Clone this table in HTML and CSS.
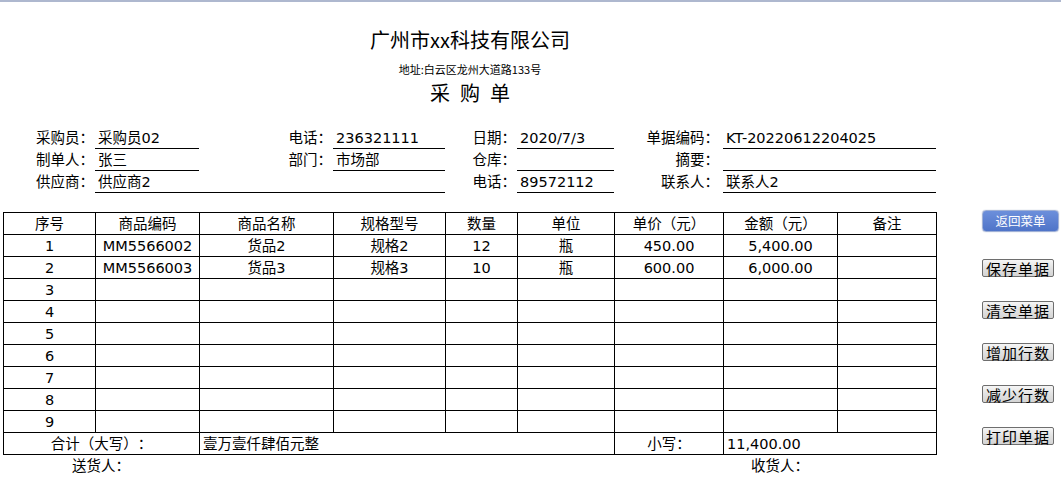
FILE: index.html
```html
<!DOCTYPE html>
<html lang="zh-CN">
<head>
<meta charset="utf-8">
<title>采购单</title>
<link rel="stylesheet" href="styles.css">
</head>
<body>
<div class="page">
  <main class="sheet">
    <header class="head">
      <h1 class="company">广州市xx科技有限公司</h1>
      <div class="addr">地址:白云区龙州大道路133号</div>
      <h2 class="doc-title">采购单</h2>
    </header>

    <section class="info">
      <div class="lbl">采购员：</div>
      <div class="val">采购员02</div>
      <div class="lbl">电话：</div>
      <div class="val">236321111</div>
      <div class="lbl">日期：</div>
      <div class="val">2020/7/3</div>
      <div class="lbl lbl-wide">单据编码：</div>
      <div class="val span2">KT-20220612204025</div>

      <div class="lbl">制单人：</div>
      <div class="val">张三</div>
      <div class="lbl">部门：</div>
      <div class="val">市场部</div>
      <div class="lbl">仓库：</div>
      <div class="val"></div>
      <div class="lbl lbl-wide">摘要：</div>
      <div class="val span2"></div>

      <div class="lbl">供应商：</div>
      <div class="val span3">供应商2</div>
      <div class="lbl">电话：</div>
      <div class="val">89572112</div>
      <div class="lbl lbl-wide">联系人：</div>
      <div class="val span2">联系人2</div>
    </section>

    <table class="items">
      <colgroup>
        <col class="c1"><col class="c2"><col class="c3"><col class="c4"><col class="c5"><col class="c6"><col class="c7"><col class="c8"><col class="c9">
      </colgroup>
      <thead>
        <tr><th>序号</th><th>商品编码</th><th>商品名称</th><th>规格型号</th><th>数量</th><th>单位</th><th>单价（元）</th><th>金额（元）</th><th>备注</th></tr>
      </thead>
      <tbody>
        <tr><td>1</td><td>MM5566002</td><td>货品2</td><td>规格2</td><td>12</td><td>瓶</td><td>450.00</td><td>5,400.00</td><td></td></tr>
        <tr><td>2</td><td>MM5566003</td><td>货品3</td><td>规格3</td><td>10</td><td>瓶</td><td>600.00</td><td>6,000.00</td><td></td></tr>
        <tr><td>3</td><td></td><td></td><td></td><td></td><td></td><td></td><td></td><td></td></tr>
        <tr><td>4</td><td></td><td></td><td></td><td></td><td></td><td></td><td></td><td></td></tr>
        <tr><td>5</td><td></td><td></td><td></td><td></td><td></td><td></td><td></td><td></td></tr>
        <tr><td>6</td><td></td><td></td><td></td><td></td><td></td><td></td><td></td><td></td></tr>
        <tr><td>7</td><td></td><td></td><td></td><td></td><td></td><td></td><td></td><td></td></tr>
        <tr><td>8</td><td></td><td></td><td></td><td></td><td></td><td></td><td></td><td></td></tr>
        <tr><td>9</td><td></td><td></td><td></td><td></td><td></td><td></td><td></td><td></td></tr>
        <tr class="total">
          <td colspan="2">合计（大写）：</td>
          <td colspan="4" class="left">壹万壹仟肆佰元整</td>
          <td>小写：</td>
          <td colspan="2" class="left">11,400.00</td>
        </tr>
      </tbody>
    </table>

    <footer class="sign">
      <div class="sender">送货人：</div>
      <div class="receiver">收货人：</div>
    </footer>
  </main>

  <aside class="actions">
    <button class="btn-primary" type="button">返回菜单</button>
    <button class="btn first" type="button">保存单据</button>
    <button class="btn" type="button">清空单据</button>
    <button class="btn" type="button">增加行数</button>
    <button class="btn" type="button">减少行数</button>
    <button class="btn" type="button">打印单据</button>
  </aside>
</div>
</body>
</html>
```

FILE: styles.css
```css
html, body {
  margin: 0;
  padding: 0;
  background: #fff;
}

body {
  border-top: 2px solid #aeb8cf;
  font-family: "DejaVu Sans", "Noto Sans CJK SC", sans-serif;
  font-size: 14.5px;
  color: #000;
  text-spacing-trim: space-all;
}

.page {
  display: flex;
  align-items: flex-start;
}

.sheet {
  width: 940px;
  flex: none;
}

.head {
  text-align: center;
  font-family: "Noto Sans CJK SC", sans-serif;
}

.company {
  margin: 24px 0 0;
  font-size: 20px;
  font-weight: normal;
  line-height: 28px;
}

.addr {
  margin-top: 7px;
  font-size: 11px;
  line-height: 16px;
}

.doc-title {
  margin: 4px 0 0;
  font-size: 20px;
  font-weight: normal;
  line-height: 24px;
  letter-spacing: 10px;
  padding-left: 10px;
}

.info,
.sign {
  display: grid;
  grid-template-columns: 92px 104px 134px 112px 72px 97px 109px 114px 99px;
  margin-left: 3px;
}

.info {
  margin-top: 22px;
  grid-auto-rows: 22px;
  line-height: 22px;
}

.lbl {
  text-align: right;
  padding-right: 1px;
  white-space: nowrap;
}

.lbl-wide {
  padding-right: 4px;
}

.val {
  border-bottom: 1px solid #000;
  padding-left: 3px;
  white-space: nowrap;
}

.span2 { grid-column: span 2; }
.span3 { grid-column: span 3; }

.items {
  margin: 19px 0 0 3px;
  border-collapse: collapse;
  table-layout: fixed;
  width: 934px;
}

.c1 { width: 92px; }
.c2 { width: 104px; }
.c3 { width: 134px; }
.c4 { width: 112px; }
.c5 { width: 72px; }
.c6 { width: 97px; }
.c7 { width: 109px; }
.c8 { width: 114px; }
.c9 { width: 99px; }

.items th,
.items td {
  border: 1px solid #000;
  height: 21px;
  padding: 0;
  line-height: 20px;
  text-align: center;
  font-weight: normal;
  white-space: nowrap;
  overflow: hidden;
}

.items td.left {
  text-align: left;
  padding-left: 3px;
}

.sign {
  line-height: 22px;
}

.sender {
  grid-column: 1 / span 2;
  text-align: center;
}

.receiver {
  grid-column: 8;
  text-align: center;
}

.actions {
  display: flex;
  flex-direction: column;
  align-items: flex-start;
  padding: 208px 0 0 42px;
}

.btn-primary {
  width: 77px;
  height: 22px;
  padding: 0;
  border: 1px solid #9fb0d6;
  border-radius: 4px;
  background: linear-gradient(#6c8fdb, #4f74c8);
  color: #fff;
  font-family: "Noto Sans CJK SC", sans-serif;
  font-size: 12.5px;
  line-height: 18px;
  box-shadow: 0 0 1px #8899bb;
}

.btn {
  width: 72px;
  height: 18px;
  margin-top: 24px;
  padding: 0;
  border: 1px solid #6e6e6e;
  border-radius: 2px;
  background: linear-gradient(#f6f6f6, #e2e2e2 50%, #d4d4d4);
  color: #000;
  font-family: "Noto Sans CJK SC", sans-serif;
  font-size: 15px;
  line-height: 15px;
  letter-spacing: 1px;
}

.btn.first {
  margin-top: 27px;
}
```
